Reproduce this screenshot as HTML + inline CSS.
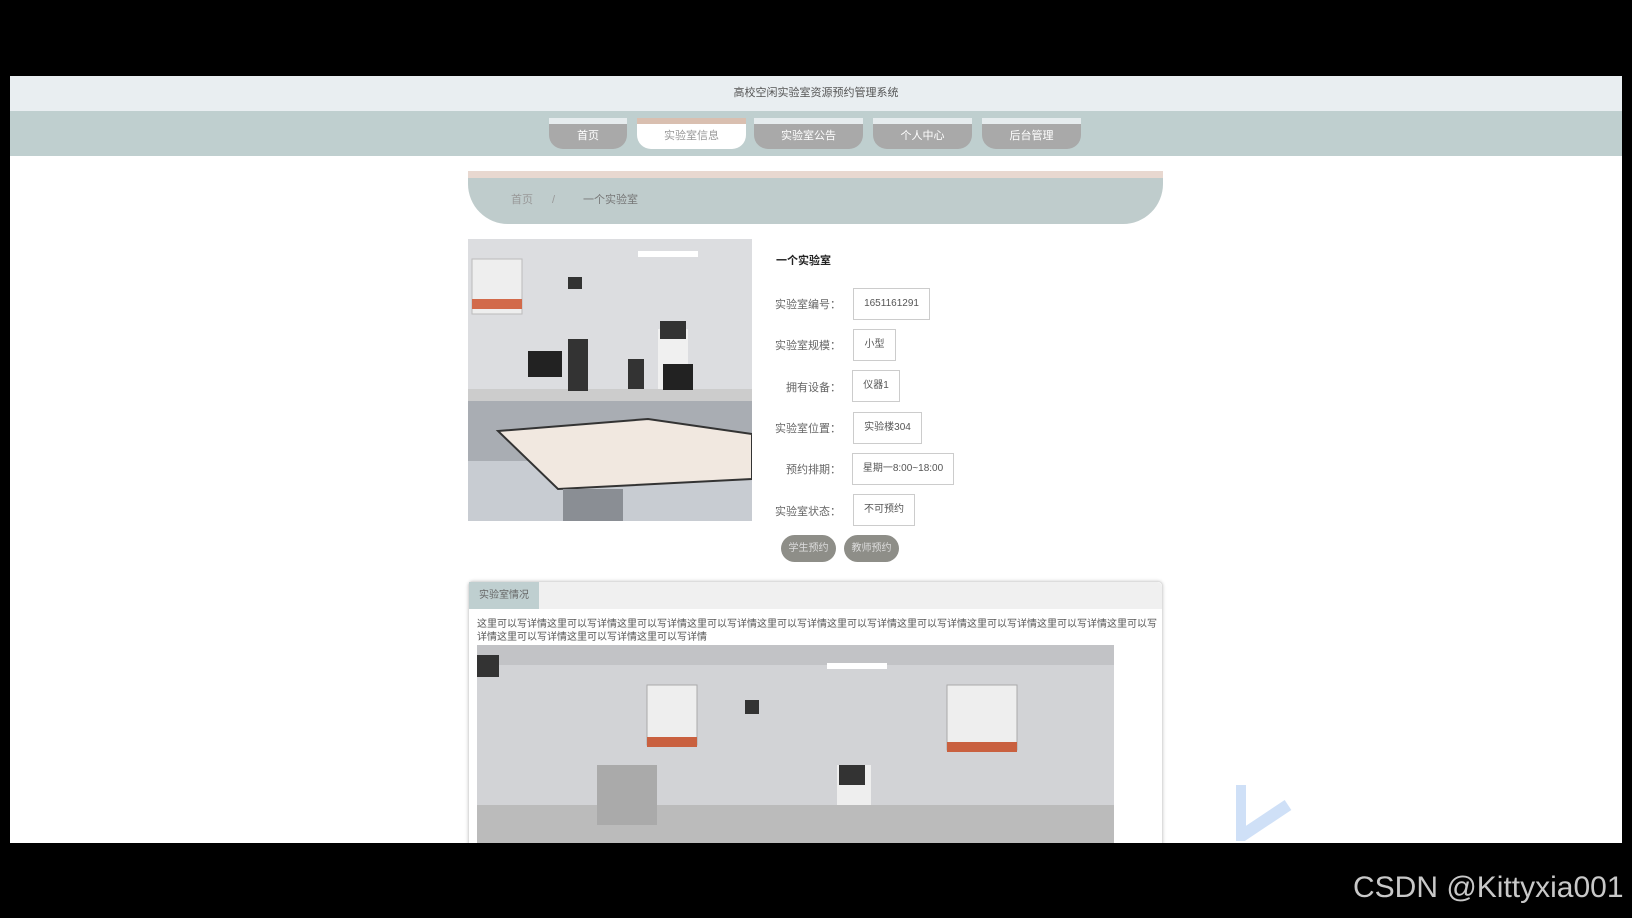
<!DOCTYPE html>
<html><head><meta charset="utf-8"><style>
*{margin:0;padding:0;box-sizing:border-box}
body{width:1632px;height:918px;background:#000;position:relative;overflow:hidden;font-family:"Liberation Sans","Noto Sans CJK SC",sans-serif;}
.a{position:absolute}
#page{left:10px;top:76px;width:1612px;height:767px;background:#fff;overflow:hidden}
.nav{top:118px;height:31px;background:#a9a9a9;border-top:6px solid #e6ecee;border-radius:0 0 14px 14px;color:#fff;font-size:11px;text-align:center;line-height:25px}
.lab{width:100px;text-align:right;font-size:11px;color:#666;left:741px}
.box{border:1px solid #ccc;font-size:10px;color:#555;text-align:center;height:32px;line-height:30px;background:#fff}
.btn{top:535px;height:27px;width:55px;border-radius:14px;background:#8e8e88;color:#ddd;font-size:10px;text-align:center;line-height:27px}
</style></head><body>
<div class="a" id="page"></div>
<div class="a" style="left:10px;top:76px;width:1612px;height:35px;background:#e9eef1;text-align:center;font-size:11px;line-height:35px;color:#555">高校空闲实验室资源预约管理系统</div>
<div class="a" style="left:10px;top:111px;width:1612px;height:45px;background:#bfcfcf"></div>
<div class="a nav" style="left:549px;width:78px">首页</div>
<div class="a nav" style="left:637px;width:109px;background:#fff;color:#999;border-top-color:#d9bfb0">实验室信息</div>
<div class="a nav" style="left:754px;width:109px">实验室公告</div>
<div class="a nav" style="left:873px;width:99px">个人中心</div>
<div class="a nav" style="left:982px;width:99px">后台管理</div>
<div class="a" style="left:468px;top:171px;width:695px;height:53px;background:#bfcccc;border-top:7px solid #e8d8d0;border-radius:0 0 40px 40px;font-size:11px;color:#999;line-height:44px">
<span class="a" style="left:43px">首页</span><span class="a" style="left:84px">/</span><span class="a" style="left:115px;color:#777">一个实验室</span></div>
<svg class="a" style="left:468px;top:239px" width="284" height="282" viewBox="0 0 284 282">
<rect width="284" height="282" fill="#e4e4e6"/><rect y="0" width="284" height="160" fill="#dcdde0"/>
<rect x="170" y="12" width="60" height="6" fill="#fff"/>
<rect x="4" y="20" width="50" height="55" fill="#eee" stroke="#bbb"/><rect x="4" y="60" width="50" height="10" fill="#d26a4a"/>
<rect x="100" y="38" width="14" height="12" fill="#333"/>
<rect x="0" y="150" width="284" height="12" fill="#ccc"/>
<rect x="0" y="162" width="284" height="60" fill="#a9adb3"/>
<rect x="60" y="112" width="34" height="26" fill="#222"/><rect x="100" y="100" width="20" height="52" fill="#333"/>
<rect x="190" y="90" width="30" height="60" fill="#f0f0f0"/><rect x="192" y="82" width="26" height="18" fill="#333"/>
<rect x="195" y="125" width="30" height="26" fill="#222"/><rect x="160" y="120" width="16" height="30" fill="#333"/>
<rect x="0" y="222" width="284" height="60" fill="#c8ccd2"/>
<polygon points="30,192 180,180 284,195 284,240 90,250" fill="#f1e8e0" stroke="#333" stroke-width="2"/>
<rect x="95" y="250" width="60" height="32" fill="#8a8e94"/>
</svg>
<div class="a" style="left:776px;top:252px;font-size:11px;font-weight:bold;color:#222">一个实验室</div>
<div class="a lab" style="top:296px">实验室编号：</div><div class="a box" style="left:853px;top:288px;width:77px">1651161291</div>
<div class="a lab" style="top:337px">实验室规模：</div><div class="a box" style="left:853px;top:329px;width:43px">小型</div>
<div class="a lab" style="top:379px">拥有设备：</div><div class="a box" style="left:852px;top:370px;width:48px">仪器1</div>
<div class="a lab" style="top:420px">实验室位置：</div><div class="a box" style="left:853px;top:412px;width:69px">实验楼304</div>
<div class="a lab" style="top:461px">预约排期：</div><div class="a box" style="left:852px;top:453px;width:102px">星期一8:00~18:00</div>
<div class="a lab" style="top:503px">实验室状态：</div><div class="a box" style="left:853px;top:494px;width:62px">不可预约</div>
<div class="a btn" style="left:781px">学生预约</div><div class="a btn" style="left:844px">教师预约</div>
<div class="a" style="left:468px;top:581px;width:695px;height:280px;border:1px solid #ddd;border-radius:5px;box-shadow:0 0 3px #ccc;background:#fff"></div>
<div class="a" style="left:469px;top:582px;width:693px;height:27px;background:#f0f0f0;border-radius:5px 5px 0 0"></div>
<div class="a" style="left:469px;top:582px;width:70px;height:27px;background:#bfcfd0;font-size:10px;color:#666;text-align:center;line-height:27px">实验室情况</div>
<div class="a" style="left:477px;top:618px;width:680px;font-size:10px;line-height:13px;color:#555">这里可以写详情这里可以写详情这里可以写详情这里可以写详情这里可以写详情这里可以写详情这里可以写详情这里可以写详情这里可以写详情这里可以写详情这里可以写详情这里可以写详情这里可以写详情</div>
<svg class="a" style="left:477px;top:645px" width="637" height="198" viewBox="0 0 637 198">
<rect width="637" height="198" fill="#d2d3d6"/><rect x="0" y="0" width="637" height="20" fill="#c2c3c6"/>
<rect x="350" y="18" width="60" height="6" fill="#fff"/>
<rect x="170" y="40" width="50" height="60" fill="#eee" stroke="#aaa"/><rect x="170" y="92" width="50" height="10" fill="#c9603f"/>
<rect x="470" y="40" width="70" height="65" fill="#eee" stroke="#aaa"/><rect x="470" y="97" width="70" height="10" fill="#c9603f"/>
<rect x="0" y="10" width="22" height="22" fill="#333"/><rect x="268" y="55" width="14" height="14" fill="#333"/>
<rect x="360" y="120" width="34" height="78" fill="#eee"/><rect x="362" y="120" width="26" height="20" fill="#333"/>
<rect x="0" y="160" width="637" height="38" fill="#bbb"/>
<rect x="120" y="120" width="60" height="60" fill="#aaa"/>
</svg>
<svg class="a" style="left:1236px;top:781px" width="60" height="60"><path d="M4 4 L4 56 L52 24" fill="none" stroke="#cfe0f7" stroke-width="12" stroke-linejoin="round"/></svg>
<div class="a" style="left:0;top:843px;width:1632px;height:75px;background:#000"></div>
<div class="a" style="left:1353px;top:871px;font-size:30px;color:#c8c8c8;font-family:'Liberation Sans',sans-serif">CSDN @Kittyxia001</div>
</body></html>
